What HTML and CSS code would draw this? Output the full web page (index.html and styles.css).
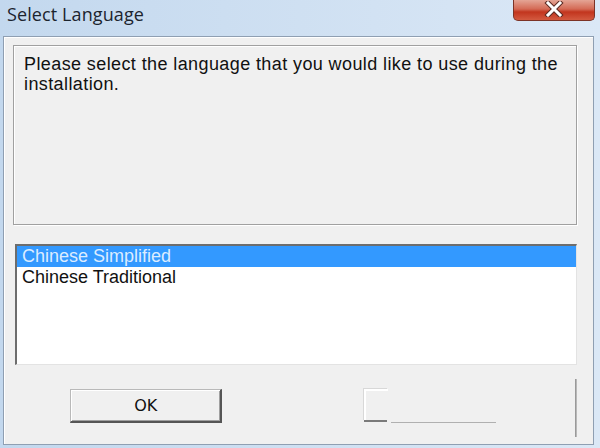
FILE: index.html
```html
<!DOCTYPE html>
<html>
<head>
<meta charset="utf-8">
<link rel="stylesheet" href="styles.css">
</head>
<body>
<div class="window">
  <div class="titlebar">
    <span class="title">Select Language</span>
    <div class="close">
      <svg width="24" height="16" viewBox="0 0 24 16">
        <path d="M6 2 L18 14 M18 2 L6 14" stroke="#5a2a22" stroke-width="5" stroke-linecap="square"/>
        <path d="M6 2 L18 14 M18 2 L6 14" stroke="#ffffff" stroke-width="3" stroke-linecap="square"/>
      </svg>
    </div>
  </div>
  <div class="client">
    <div class="panel">
      <p class="prompt">Please select the language that you would like to use during the installation.</p>
    </div>
    <div class="list">
      <div class="item selected">Chinese Simplified</div>
      <div class="item">Chinese Traditional</div>
    </div>
    <div class="buttons">
      <div class="btn ok">OK</div>
      <div class="btn ghost"><span class="ghost-dark"></span><span class="ghost-line"></span></div>
      <div class="vline"></div>
    </div>
  </div>
</div>
</body>
</html>
```
FILE: styles.css
```css
html, body {
  margin: 0;
  padding: 0;
}
body {
  width: 600px;
  height: 448px;
  overflow: hidden;
  background: #c6daef;
  font-family: "Liberation Sans", Arial, sans-serif;
}
.window {
  display: flex;
  flex-direction: column;
  width: 600px;
  height: 448px;
  background: linear-gradient(90deg, #c3d8ee 0%, #cfe0f2 50%, #dbe8f6 100%);
}
.titlebar {
  height: 36px;
  display: flex;
  align-items: flex-start;
  justify-content: space-between;
  flex-shrink: 0;
}
.title {
  font-family: "Open Sans", "Noto Sans", sans-serif;
  font-size: 18px;
  color: #1c242e;
  margin-left: 7px;
  margin-top: 1px;
  line-height: 26px;
  letter-spacing: 0.1px;
}
.close {
  width: 80px;
  height: 20px;
  margin-right: 5px;
  border: 1px solid #7c3326;
  border-top: none;
  border-radius: 0 0 5px 5px;
  background: linear-gradient(180deg, #e4a595 0%, #d46a55 45%, #c2351e 60%, #d35a40 100%);
  display: flex;
  align-items: center;
  justify-content: center;
}
.close svg {
  margin-top: -3px;
}
.client {
  margin: 0 6px 3px 3px;
  flex: 1;
  background: #f0f0f0;
  border: 1px solid #8f9fb2;
  box-shadow: inset 1px 1px 0 #ffffff;
  display: flex;
  flex-direction: column;
  padding: 8px 16px 0 9px;
}
.panel {
  box-sizing: border-box;
  height: 180px;
  flex-shrink: 0;
  border: 1px solid #a0a0a0;
  box-shadow: 1px 1px 0 #ffffff, inset 1px 1px 0 #ffffff;
  background: #f0f0f0;
  padding: 8px 10px 0 10px;
}
.prompt {
  margin: 0;
  font-size: 18px;
  letter-spacing: 0.4px;
  line-height: 20px;
  color: #111;
}
.list {
  box-sizing: border-box;
  flex-shrink: 0;
  margin-top: 19px;
  margin-left: 2px;
  height: 121px;
  background: #ffffff;
  border-left: 2px solid #6d6d6d;
  border-top: 2px solid #6d6d6d;
  border-right: 1px solid #e3e3e3;
  border-bottom: 1px solid #e3e3e3;
}
.item {
  height: 21px;
  line-height: 21px;
  padding-left: 5px;
  font-size: 18px;
  color: #111;
}
.item.selected {
  background: #3399ff;
  color: #dcecff;
}
.buttons {
  display: flex;
  align-items: flex-start;
  margin-top: 14px;
}
.btn {
  height: 34px;
  box-sizing: border-box;
}
.ok {
  margin-top: 10px;
  margin-left: 57px;
  width: 153px;
  border-top: 1px solid #b9b9b9;
  border-left: 1px solid #b9b9b9;
  border-right: 2px solid #555;
  border-bottom: 2px solid #555;
  box-shadow: inset 1px 1px 0 #ffffff, inset -1px -1px 0 #a0a0a0;
  background: #f0f0f0;
  display: flex;
  align-items: center;
  justify-content: center;
  font-family: "DejaVu Sans", sans-serif;
  font-size: 16px;
  color: #111;
}
.ghost {
  margin-top: 10px;
  margin-left: 142px;
  width: 132px;
  position: relative;
}
.ghost::before {
  content: "";
  position: absolute;
  left: 0;
  top: 0;
  width: 22px;
  height: 30px;
  border-left: 2px solid #ffffff;
  border-top: 2px solid #ffffff;
  box-shadow: -1px -1px 0 #d8d8d8;
}
.ghost-dark {
  position: absolute;
  left: 0;
  top: 31px;
  width: 23px;
  height: 2px;
  background: #7a7a7a;
}
.ghost-line {
  position: absolute;
  left: 27px;
  top: 33px;
  width: 105px;
  height: 1px;
  background: #b0b0b0;
}
.vline {
  margin-left: 79px;
  width: 2px;
  height: 58px;
  background: linear-gradient(90deg, #8a8a8a, #c8c8c8);
}
```
